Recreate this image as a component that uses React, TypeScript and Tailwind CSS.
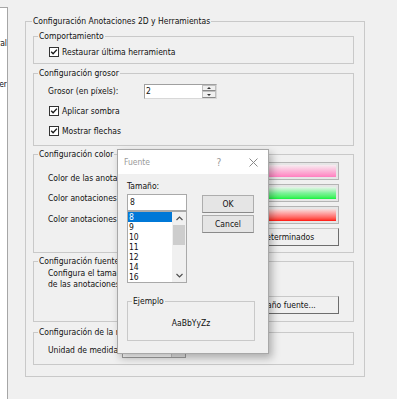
import { FC, ReactNode } from "react"

interface GroupProps {
  title: string
  className?: string
  titleLeft?: string
  children?: ReactNode
}

const GroupBox: FC<GroupProps> = ({ title, className = "", titleLeft = "left-[4px]", children }) => {
  return (
    <div className={`relative border border-[#c9c9c9] ${className}`}>
      <span className={`absolute top-[-6px] ${titleLeft} bg-[#f0f0f0] px-[1px] whitespace-nowrap`}>{title}</span>
      {children}
    </div>
  )
}

const CheckRow: FC<{ label: string; className?: string }> = ({ label, className = "" }) => {
  return (
    <div className={`flex items-center gap-[3px] h-[10px] ${className}`}>
      <div className="w-[10px] h-[10px] border border-[#333333] bg-white flex items-center justify-center">
        <svg width="8" height="8" viewBox="0 0 8 8">
          <path d="M1.2 3.8 L3.1 5.8 L6.9 1.6" fill="none" stroke="#1a1a1a" strokeWidth="1.4" />
        </svg>
      </div>
      <span>{label}</span>
    </div>
  )
}

const ColorButton: FC<{ gradient: string }> = ({ gradient }) => {
  return (
    <div className="w-[145px] h-[18px] border border-[#b4b4b4] bg-[#e6e6e6] p-[2px]">
      <div className={`w-full h-full ${gradient}`} />
    </div>
  )
}

const ClassicButton: FC<{ label: string; className?: string }> = ({ label, className = "" }) => {
  return (
    <div
      className={`w-[145px] h-[18px] border border-[#c8c8c8] border-r-[#6d6d6d] border-b-[#6d6d6d] bg-[#f0f0f0] flex items-center justify-center ${className}`}
    >
      {label}
    </div>
  )
}

const Chevron: FC<{ down?: boolean }> = ({ down }) => (
  <svg width="7" height="5" viewBox="0 0 7 5">
    <path d={down ? "M0.5 1 L3.5 4 L6.5 1" : "M0.5 4 L3.5 1 L6.5 4"} fill="none" stroke="#505050" strokeWidth="1.2" />
  </svg>
)

const FontDialog: FC = () => {
  const sizes = ["8", "9", "10", "11", "12", "14", "16"]
  return (
    <div className="absolute left-[117px] top-[149px] w-[152px] h-[205px] border border-[#a8a8a8] bg-[#f0f0f0] shadow-[3px_4px_8px_rgba(0,0,0,0.28)] flex flex-col">
      <div className="h-[24px] bg-white flex items-center">
        <span className="pl-[6px] text-[#9a9a9a]">Fuente</span>
        <span className="ml-auto w-[28px] text-center text-[#9a9a9a] text-[10px]">?</span>
        <span className="ml-[5px] w-[30px] flex items-center justify-center">
          <svg width="9" height="9" viewBox="0 0 9 9">
            <path d="M0.5 0.5 L8.5 8.5 M8.5 0.5 L0.5 8.5" stroke="#8a8a8a" strokeWidth="1" />
          </svg>
        </span>
      </div>
      <div className="pl-[9px] pt-[7px] flex flex-col">
        <span>Tamaño:</span>
        <div className="flex mt-[2px]">
          <div className="w-[60px] flex flex-col">
            <div className="h-[17px] border border-[#a9a9a9] bg-white flex items-center pl-[2px]">8</div>
            <div className="h-[72px] border border-[#a9a9a9] bg-white flex">
              <div className="flex-1 flex flex-col">
                {sizes.map((s, i) => (
                  <div
                    key={s}
                    className={`h-[10px] leading-[10px] pl-[1px] ${i === 0 ? "bg-[#0078d7] text-white" : ""}`}
                  >
                    {s}
                  </div>
                ))}
              </div>
              <div className="w-[14px] bg-[#f0f0f0] flex flex-col items-center">
                <div className="h-[13px] flex items-center justify-center">
                  <Chevron />
                </div>
                <div className="w-[12px] h-[20px] bg-[#cdcdcd]" />
                <div className="mt-auto h-[13px] flex items-center justify-center">
                  <Chevron down />
                </div>
              </div>
            </div>
          </div>
          <div className="ml-[15px] mt-[1px] flex flex-col gap-[2px]">
            <div className="w-[52px] h-[18px] border border-[#adadad] border-b-[#8a8a8a] bg-[#e5e5e5] flex items-center justify-center">
              OK
            </div>
            <div className="w-[52px] h-[18px] border border-[#adadad] border-b-[#8a8a8a] bg-[#e5e5e5] flex items-center justify-center">
              Cancel
            </div>
          </div>
        </div>
        <GroupBox title="Ejemplo" className="mt-[18px] w-[128px] h-[40px]" titleLeft="left-[4px]">
          <div className="h-full flex items-center justify-center pt-[4px]">AaBbYyZz</div>
        </GroupBox>
      </div>
    </div>
  )
}

const App: FC = () => {
  return (
    <div className="w-[397px] h-[399px] bg-[#f0f0f0] flex relative overflow-hidden text-[#111] text-[8.5px] leading-[11px] font-['DejaVu_Sans_Condensed','Liberation_Sans',Arial,sans-serif] font-stretch-condensed">
      {/* lista lateral recortada */}
      <div className="w-[8px] mt-[7px] bg-white border-t border-r border-[#a6a6a6] overflow-hidden flex flex-col">
        <div className="mt-[30px] flex justify-end whitespace-nowrap">General</div>
        <div className="mt-[30px] flex justify-end whitespace-nowrap">Visualizer</div>
      </div>

      <div className="ml-[17px] mt-[21px]">
        <GroupBox
          title="Configuración Anotaciones 2D y Herramientas"
          titleLeft="left-[6px]"
          className="w-[340px] h-[356px] pt-[14px] pl-[7px] flex flex-col"
        >
          <GroupBox title="Comportamiento" className="w-[321px] h-[28px] pt-[10px] pl-[15px]">
            <CheckRow label="Restaurar última herramienta" />
          </GroupBox>

          <GroupBox title="Configuración grosor" className="mt-[9px] w-[321px] h-[73px] pt-[10px] pl-[14px]">
            <div className="flex items-center">
              <span className="w-[96px]">Grosor (en píxels):</span>
              <div className="w-[73px] h-[15px] border border-[#a0a0a0] border-r-[#d8d8d8] border-b-[#d8d8d8] bg-white flex">
                <span className="flex-1 pl-[1px] leading-[13px]">2</span>
                <div className="w-[14px] flex flex-col">
                  <div className="h-[6px] border border-[#c0c0c0] border-b-[#8a8a8a] bg-[#f0f0f0] flex items-center justify-center">
                    <div className="w-0 h-0 border-l-[2px] border-r-[2px] border-b-[2px] border-l-transparent border-r-transparent border-b-[#333]" />
                  </div>
                  <div className="h-[7px] border border-[#c0c0c0] border-b-[#8a8a8a] bg-[#f0f0f0] flex items-center justify-center">
                    <div className="w-0 h-0 border-l-[2px] border-r-[2px] border-t-[2px] border-l-transparent border-r-transparent border-t-[#333]" />
                  </div>
                </div>
              </div>
            </div>
            <CheckRow label="Aplicar sombra" className="mt-[7px] ml-[1px]" />
            <CheckRow label="Mostrar flechas" className="mt-[10px] ml-[1px]" />
          </GroupBox>

          <GroupBox title="Configuración color" className="mt-[8px] w-[321px] h-[99px] pl-[14px] pr-[14px] pt-[7px] flex">
            <div className="flex flex-col pt-[11px]">
              <span className="h-[20px]">Color de las anotaciones</span>
              <span className="h-[21px]">Color anotaciones seleccionadas</span>
              <span>Color anotaciones fijas</span>
            </div>
            <div className="ml-auto flex flex-col gap-[4px]">
              <ColorButton gradient="bg-linear-to-b from-[#f7ecf1] via-[#fbb6d8] to-[#ff7fc0]" />
              <ColorButton gradient="bg-linear-to-b from-[#e6f4ea] via-[#7cf29a] to-[#00f23e]" />
              <ColorButton gradient="bg-linear-to-b from-[#f3e0e0] via-[#ff8a8a] to-[#ff0000]" />
              <ClassicButton label="Valores predeterminados" />
            </div>
          </GroupBox>

          <GroupBox title="Configuración fuentes" className="mt-[8px] w-[321px] h-[61px] pl-[14px] pr-[14px] pt-[6px] flex flex-col">
            <span className="whitespace-nowrap">Configura el tamaño de fuente</span>
            <span className="whitespace-nowrap">de las anotaciones 2D</span>
            <ClassicButton label="Cambiar tamaño fuente..." className="self-end mt-[6px]" />
          </GroupBox>

          <GroupBox title="Configuración de la medida" className="mt-[10px] w-[321px] h-[33px] pl-[14px] pt-[9px]">
            <div className="flex items-center">
              <span className="w-[74px]">Unidad de medida:</span>
              <div className="w-[64px] h-[16px] border border-[#a0a0a0] bg-white flex items-center">
                <span className="flex-1 pl-[2px]">mm</span>
                <div className="w-[14px] h-full border-l border-[#c8c8c8] bg-[#e5e5e5]" />
              </div>
            </div>
          </GroupBox>
        </GroupBox>
      </div>

      <FontDialog />
    </div>
  )
}

export default App
